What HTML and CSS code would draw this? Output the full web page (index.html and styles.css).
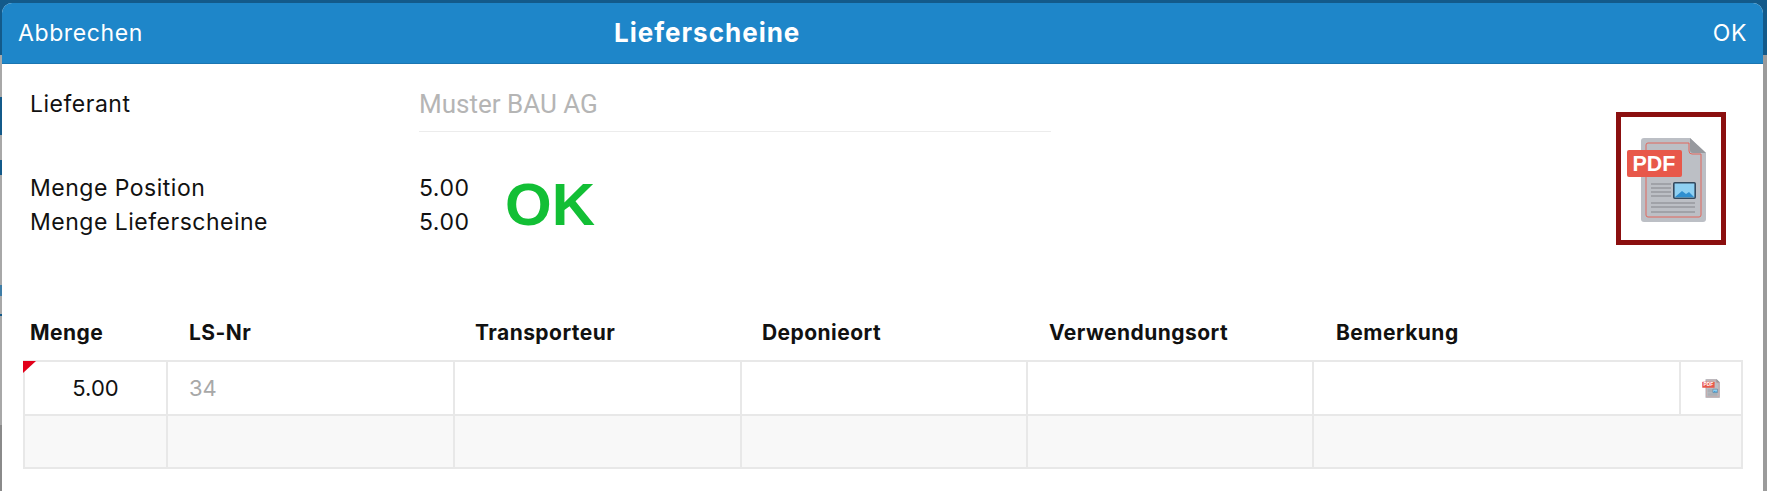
FILE: index.html
```html
<!DOCTYPE html>
<html lang="de">
<head>
<meta charset="utf-8">
<title>Lieferscheine</title>
<link rel="stylesheet" href="styles.css">
</head>
<body>
<div class="backdrop">
  <section class="modal">
    <header class="bar">
      <span class="bar-left">Abbrechen</span>
      <span class="bar-title">Lieferscheine</span>
      <span class="bar-right">OK</span>
    </header>
    <div class="summary">
      <div class="fields">
        <div class="supplier">
          <span class="label">Lieferant</span>
          <span class="supplier-value">Muster BAU AG</span>
        </div>
        <div class="amounts">
          <div class="amount-labels">
            <div>Menge Position</div>
            <div>Menge Lieferscheine</div>
          </div>
          <div class="amount-values">
            <div>5.00</div>
            <div>5.00</div>
          </div>
          <div class="status">OK</div>
        </div>
      </div>
      <div class="pdf-box">
        <svg class="pdf-big" viewBox="0 0 80 84"><use href="#pdf"/></svg>
      </div>
    </div>
    <div class="table-wrap">
      <div class="thead">
        <div>Menge</div><div>LS-Nr</div><div>Transporteur</div><div>Deponieort</div><div>Verwendungsort</div><div>Bemerkung</div>
      </div>
      <div class="tbody">
        <div class="row">
          <div class="cell cell-qty"><span class="flag"></span>5.00</div>
          <div class="cell cell-ls">34</div>
          <div class="cell"></div><div class="cell"></div><div class="cell"></div><div class="cell"></div>
          <div class="cell cell-icon"><svg class="pdf-small" viewBox="0 0 80 84"><use href="#pdf"/></svg></div>
        </div>
        <div class="row row-empty">
          <div class="cell"></div><div class="cell"></div><div class="cell"></div><div class="cell"></div><div class="cell"></div>
          <div class="cell cell-wide"></div>
        </div>
      </div>
    </div>
  </section>
</div>
<svg class="defs" width="0" height="0">
  <defs>
    <symbol id="pdf" viewBox="0 0 80 84">
      <path d="M15 3a3 3 0 0 1 3-3h46l16 15v66a3 3 0 0 1-3 3H18a3 3 0 0 1-3-3z" fill="#bcbfc5"/>
      <path d="M64 0l16 15H67a3 3 0 0 1-3-3z" fill="#97999e"/>
      <path d="M20 7a2 2 0 0 1 2-2h41v8a3 3 0 0 0 3 3h9v61a2 2 0 0 1-2 2H22a2 2 0 0 1-2-2z" fill="none" stroke="#e2675c" stroke-width="1"/>
      <path d="M25 46h20M25 50h20M25 54h20M25 58h20M25 65h44M25 69h44M25 74h44" stroke="#83868c" stroke-width="1.2"/>
      <rect x="47.8" y="44.8" width="21.4" height="15.4" rx="1" fill="#8fd0f2" stroke="#34495e" stroke-width="1.6"/>
      <path d="M49 59l7-6 4 3 3-2 5 5z" fill="#2f8fd0"/>
      <rect x="1" y="12" width="55" height="27" rx="2" fill="#e8584a"/>
      <text x="28" y="33" text-anchor="middle" class="pdf-text">PDF</text>
    </symbol>
  </defs>
</svg>
</body>
</html>
```

FILE: styles.css
```css
* { box-sizing: border-box; }
html, body { margin: 0; height: 100%; }
body {
  background: #fff;
  font-family: "Inter", "Liberation Sans", sans-serif;
  font-size: 23px;
  letter-spacing: 0.5px;
  color: #111;
  overflow: hidden;
}
.backdrop {
  height: 491px;
  padding: 3px 4px 0 2px;
  background:
    linear-gradient(to bottom,
      transparent 97px, #135a8a 97px, #135a8a 135px, transparent 135px,
      transparent 160px, #135a8a 160px, #135a8a 175px, transparent 175px,
      transparent 285px, #3f7da6 285px, #3f7da6 296px, transparent 296px,
      transparent 314px, #135a8a 314px, #135a8a 316px, transparent 316px,
      transparent 425px, #8a8a8a 425px) left top / 2px 100% no-repeat,
    linear-gradient(#135a8a 0, #135a8a 55px, transparent 55px),
    linear-gradient(to right, #a8a8a8 0, #a8a8a8 2px, #9b9b9b 2px);
}
.modal {
  height: 488px;
  background: #fff;
  border-radius: 10px 10px 0 0;
  overflow: hidden;
}
.bar {
  height: 61px;
  background: #1e86c9;
  border-bottom: 1px solid #1a76b2;
  color: #fff;
  display: grid;
  grid-template-columns: 596px 186px 1fr;
  align-items: center;
  padding: 0 16px 1px;
  letter-spacing: 0.6px;
}
.bar-title { font-weight: 700; font-size: 26px; letter-spacing: 1px; white-space: nowrap; }
.bar-right { text-align: right; }
.summary {
  display: flex;
  justify-content: space-between;
  padding: 0 37px 0 28px;
}
.fields { flex: none; width: 1021px; }
.supplier {
  display: flex;
  align-items: flex-start;
  height: 68px;
}
.supplier .label { width: 389px; padding-top: 20px; line-height: 41px; }
.supplier-value {
  width: 632px;
  height: 68px;
  padding-top: 20px;
  line-height: 41px;
  color: #b5b5b5;
  border-bottom: 1px solid #ececec;
  font-family: "Roboto", "Liberation Sans", sans-serif;
  font-size: 26px;
  letter-spacing: 0;
}
.amounts {
  display: flex;
  align-items: flex-start;
  padding-top: 39px;
  line-height: 34px;
}
.amount-labels { width: 389px; }
.amount-values { width: 86px; }
.status {
  font-family: "Liberation Sans", sans-serif;
  font-weight: 700;
  font-size: 60px;
  line-height: 68px;
  letter-spacing: 0;
  color: #12bf35;
}
.pdf-box {
  width: 110px;
  height: 133px;
  margin-top: 48px;
  border: 5px solid #8b0f0f;
  display: flex;
  align-items: center;
  justify-content: center;
  padding: 3px 11px 0 0;
}
.pdf-big { width: 80px; height: 84px; }
.pdf-small { width: 18px; height: 19px; display: block; }
.pdf-text {
  font-family: "Liberation Sans", sans-serif;
  font-weight: 700;
  font-size: 21.5px;
  letter-spacing: 0;
  fill: #fff;
}
.defs { position: absolute; }
.table-wrap { padding: 0 20px 0 21px; margin-top: 74px; }
.thead {
  display: grid;
  grid-template-columns: 159px 286px 287px 287px 287px 1fr;
  height: 41px;
  padding-left: 7px;
  font-weight: 700;
  font-size: 21px;
  letter-spacing: 0.45px;
  line-height: 28px;
}
.tbody { border: 2px solid #e8e8e8; }
.row {
  display: grid;
  grid-template-columns: 143px 287px 287px 286px 286px 367px 1fr;
  height: 54px;
  border-bottom: 2px solid #e8e8e8;
}
.row-empty {
  height: 51px;
  background: #f8f8f8;
  border-bottom: 0;
}
.cell {
  position: relative;
  border-right: 2px solid #e8e8e8;
  display: flex;
  align-items: center;
  font-size: 22px;
  letter-spacing: 0;
}
.cell:last-child, .cell-wide { border-right: 0; }
.cell-wide { grid-column: 6 / 8; }
.cell-qty { justify-content: center; color: #111; }
.cell-ls { padding-left: 21px; color: #a8a8a8; }
.cell-icon { justify-content: center; }
.flag {
  position: absolute;
  left: -2px;
  top: -1px;
  border-style: solid;
  border-width: 12px 13px 0 0;
  border-color: #e2001a transparent transparent transparent;
}
```
